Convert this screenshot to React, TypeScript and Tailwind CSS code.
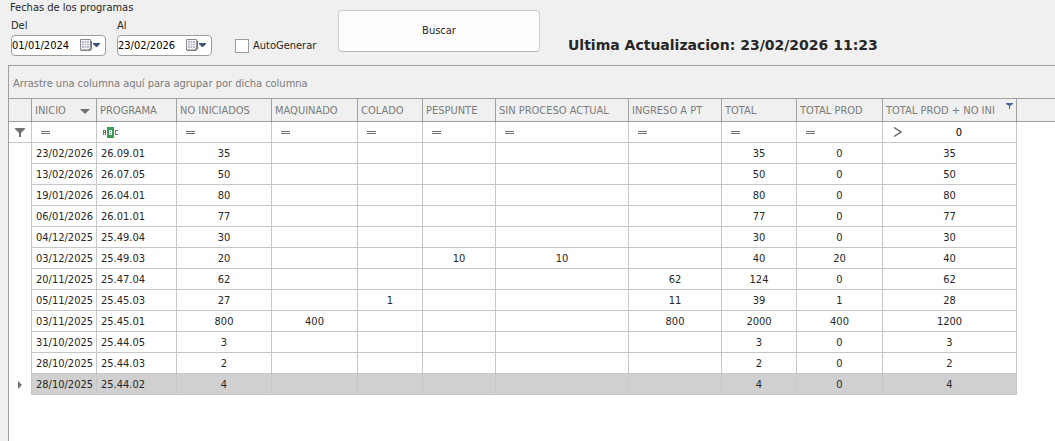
import { useState } from "react";

interface Column {
  key: string;
  title: string;
  width: string;
  align?: "left" | "center";
}

const columns: Column[] = [
  { key: "inicio", title: "INICIO", width: "w-[65px]", align: "left" },
  { key: "programa", title: "PROGRAMA", width: "w-[80px]", align: "left" },
  { key: "noIniciados", title: "NO INICIADOS", width: "w-[95px]" },
  { key: "maquinado", title: "MAQUINADO", width: "w-[86px]" },
  { key: "colado", title: "COLADO", width: "w-[65px]" },
  { key: "pespunte", title: "PESPUNTE", width: "w-[73px]" },
  { key: "sinProceso", title: "SIN PROCESO ACTUAL", width: "w-[133px]" },
  { key: "ingresoPt", title: "INGRESO A PT", width: "w-[93px]" },
  { key: "total", title: "TOTAL", width: "w-[75px]" },
  { key: "totalProd", title: "TOTAL PROD", width: "w-[86px]" },
  { key: "totalProdNoIni", title: "TOTAL PROD + NO INI", width: "w-[134px]" },
];

const rows: string[][] = [
  ["23/02/2026", "26.09.01", "35", "", "", "", "", "", "35", "0", "35"],
  ["13/02/2026", "26.07.05", "50", "", "", "", "", "", "50", "0", "50"],
  ["19/01/2026", "26.04.01", "80", "", "", "", "", "", "80", "0", "80"],
  ["06/01/2026", "26.01.01", "77", "", "", "", "", "", "77", "0", "77"],
  ["04/12/2025", "25.49.04", "30", "", "", "", "", "", "30", "0", "30"],
  ["03/12/2025", "25.49.03", "20", "", "", "10", "10", "", "40", "20", "40"],
  ["20/11/2025", "25.47.04", "62", "", "", "", "", "62", "124", "0", "62"],
  ["05/11/2025", "25.45.03", "27", "", "1", "", "", "11", "39", "1", "28"],
  ["03/11/2025", "25.45.01", "800", "400", "", "", "", "800", "2000", "400", "1200"],
  ["31/10/2025", "25.44.05", "3", "", "", "", "", "", "3", "0", "3"],
  ["28/10/2025", "25.44.03", "2", "", "", "", "", "", "2", "0", "2"],
  ["28/10/2025", "25.44.02", "4", "", "", "", "", "", "4", "0", "4"],
];

function CalendarIcon() {
  return (
    <svg width="21" height="13" viewBox="0 0 21 13" aria-hidden="true">
      <path d="M2 12h9l2-2V2h-1v7l-2 2H2z" fill="#77737a" />
      <path d="M1.5 0.5h10v8.5l-2 2h-8z" fill="#f6f2f4" stroke="#8b878d" />
      <path d="M3 2h7v7H3z" fill="#b4b9cc" />
      <path d="M3 4.5h7M3 6.5h7M5.5 2v7M7.5 2v7" stroke="#e6e7ef" shapeRendering="crispEdges" />
      <path d="M14 4h7v1l-3 3h-1l-3-3z" fill="#3f5578" />
    </svg>
  );
}

function FilterIcon() {
  return (
    <svg width="10" height="9" viewBox="0 0 10 9" className="mx-auto block" aria-hidden="true">
      <path d="M0 0h10v1L6 5v4H4V5L0 1z" fill="#707070" />
    </svg>
  );
}

function EqualsIcon() {
  return (
    <svg width="9" height="3" viewBox="0 0 9 3" className="block" aria-hidden="true">
      <path d="M0 0.5h9M0 2.5h9" stroke="#707070" />
    </svg>
  );
}

function ContainsIcon() {
  return (
    <svg width="16" height="11" viewBox="0 0 16 11" className="block" shapeRendering="crispEdges" aria-hidden="true">
      <rect x="4" y="0" width="7" height="11" rx="1" fill="#3b9a52" />
      <path d="M0.5 8V3.5h2V8M0.5 5.5h2" fill="none" stroke="#707070" />
      <path d="M6.5 3v5M6 3.5h2.5v4H6M6 5.5h2" fill="none" stroke="#fff" />
      <path d="M15 3.5h-2.5v4H15" fill="none" stroke="#707070" />
    </svg>
  );
}

function GreaterIcon() {
  return (
    <svg width="9" height="10" viewBox="0 0 9 10" className="block" aria-hidden="true">
      <path d="M1 0.5L8 5L1 9.5" fill="none" stroke="#606060" strokeWidth="1.3" />
    </svg>
  );
}

function DateField({ id, label, value, onChange }: { id: string; label: string; value: string; onChange: (v: string) => void }) {
  return (
    <div className="flex flex-col">
      <label htmlFor={id} className="h-4 leading-[14px]">{label}</label>
      <div className="flex h-[21px] w-[95px] items-center rounded-sm border border-[#9d9d9d] bg-white">
        <input
          id={id}
          type="text"
          value={value}
          onChange={e => onChange(e.target.value)}
          className="w-[67px] bg-transparent pt-px text-black outline-none"
        />
        <button type="button" aria-label={`Abrir calendario ${label}`} className="flex">
          <CalendarIcon />
        </button>
      </div>
    </div>
  );
}

function FilterCell({ column }: { column: Column }) {
  if (column.key === "programa") return <div className="pl-[6px]"><ContainsIcon /></div>;
  if (column.key === "totalProdNoIni") {
    return (
      <div className="flex items-center pl-[10px]">
        <GreaterIcon />
        <input
          type="text"
          aria-label={`Filtro ${column.title}`}
          defaultValue="0"
          className="h-4 min-w-0 flex-1 bg-transparent text-center text-black outline-none"
        />
      </div>
    );
  }
  return <div className="pt-px pl-[9px]"><EqualsIcon /></div>;
}

export default function App() {
  const [desde, setDesde] = useState("01/01/2024");
  const [hasta, setHasta] = useState("23/02/2026");
  const [selected, setSelected] = useState(rows.length - 1);

  return (
    <div className="flex min-h-screen flex-col bg-[#f0f0f0] font-['DejaVu_Sans_Condensed','DejaVu_Sans',sans-serif] text-[11px] leading-[14px] text-[#262626]">
      {/* Search bar */}
      <div className="flex h-[65px] shrink-0 items-start pl-[10px]">
        <fieldset className="w-[328px] shrink-0">
          <legend className="h-[19px] pt-px">Fechas de los programas</legend>
          <div className="flex items-end gap-[11px] pl-px">
            <DateField id="del" label="Del" value={desde} onChange={setDesde} />
            <DateField id="al" label="Al" value={hasta} onChange={setHasta} />
            <label className="ml-3 flex h-[21px] items-center gap-1 pt-px whitespace-nowrap">
              <input type="checkbox" className="size-[14px] appearance-none border border-[#9d9d9d] bg-white checked:bg-[#3f5578]" />
              AutoGenerar
            </label>
          </div>
        </fieldset>
        <button type="button" className="mt-[10px] h-[42px] w-[202px] shrink-0 rounded-sm border border-[#cdcdcd] border-b-[#b5b5b5] bg-[#fdfdfd]">
          Buscar
        </button>
        <h1 className="mt-[35px] ml-7 font-['DejaVu_Sans',sans-serif] text-[14px] leading-5 font-bold whitespace-nowrap">
          Ultima Actualizacion: 23/02/2026 11:23
        </h1>
      </div>

      {/* Grid */}
      <div className="ml-2 flex-1 border-t border-l border-[#a0a0a0] bg-white">
        <div className="flex h-8 items-center bg-[#f0f0f0] pt-1 pl-1 text-[#7a7a7a]">
          Arrastre una columna aquí para agrupar por dicha columna
        </div>
        <table className="w-full table-fixed border-separate border-spacing-0">
          <colgroup>
            <col className="w-[23px]" />
            {columns.map(c => <col key={c.key} className={c.width} />)}
            <col />
          </colgroup>
          <thead>
            <tr className="h-6 bg-[#f0f0f0] text-[#7a7a7a]">
              <td className="border-y border-r border-[#a0a0a0]" />
              {columns.map(c => (
                <th key={c.key} scope="col" className="border-y border-r border-[#a0a0a0] p-0 pt-[2px] pl-[3px] text-left font-normal whitespace-nowrap">
                  <div className="relative flex items-center justify-between">
                    {c.title}
                    {c.key === "inicio" && (
                      <svg width="10" height="5" viewBox="0 0 10 5" className="mr-[6px]" aria-hidden="true">
                        <path d="M0 0h10L5 5z" fill="#707070" />
                      </svg>
                    )}
                    {c.key === "totalProdNoIni" && (
                      <svg width="7" height="6" viewBox="0 0 7 6" className="absolute -top-px right-[3px]" aria-hidden="true">
                        <path d="M0 0h7v1L4 3v3H3V3L0 1z" fill="#4a6a9c" />
                      </svg>
                    )}
                  </div>
                </th>
              ))}
              <td className="border-y border-[#a0a0a0]" />
            </tr>
          </thead>
          <tbody>
            <tr className="h-[21px]">
              <td className="border-r border-b border-[#c6c6c6] p-0"><FilterIcon /></td>
              {columns.map(c => (
                <td key={c.key} className="border-r border-b border-[#c6c6c6] p-0"><FilterCell column={c} /></td>
              ))}
              <td />
            </tr>
            {rows.map((row, i) => (
              <tr key={i} onClick={() => setSelected(i)} className="h-[21px]">
                <td className="border-r border-[#c6c6c6] p-0">
                  {i === selected && (
                    <svg width="4" height="8" viewBox="0 0 4 8" className="mx-auto block" aria-hidden="true">
                      <path d="M0 0l4 4l-4 4z" fill="#707070" />
                    </svg>
                  )}
                </td>
                {row.map((value, j) => (
                  <td
                    key={columns[j].key}
                    className={`border-r border-b border-[#c6c6c6] p-0 pt-[2px] whitespace-nowrap ${columns[j].align === "left" ? "pl-1" : "text-center"} ${i === selected ? "bg-[#d0d0d0]" : ""}`}
                  >
                    {value}
                  </td>
                ))}
                <td />
              </tr>
            ))}
          </tbody>
        </table>
      </div>
    </div>
  );
}
